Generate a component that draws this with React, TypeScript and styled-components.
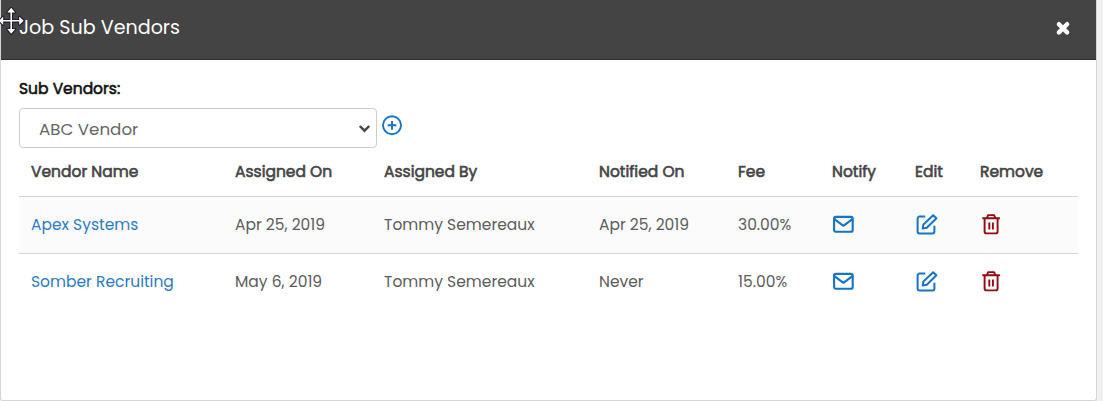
import React from "react";
import styled, { createGlobalStyle } from "styled-components";

const GlobalStyle = createGlobalStyle`
  * { box-sizing: border-box; }
  body {
    margin: 0;
    background: #f0f0f0;
    font-family: Poppins, Inter, "Open Sans", sans-serif;
    font-size: 15.5px;
    color: #5c5c5c;
    overflow: hidden;
  }
`;

const Dialog = styled.section`
  position: relative;
  width: 1097px;
  height: 401px;
  background: #fff;
  border: 1px solid #d6d6d6;
  border-top: 0;
  border-radius: 0 0 3px 3px;
`;

const Header = styled.header`
  display: flex;
  align-items: center;
  justify-content: space-between;
  height: 60px;
  padding: 0 25px 4px 18px;
  background: #444;
  border-bottom: 1px solid #303030;
`;

const Title = styled.h1`
  margin: 0;
  font-size: 19.1px;
  line-height: 28px;
  font-weight: 400;
  color: #fff;
`;

const IconButton = styled.button`
  display: flex;
  padding: 0;
  border: 0;
  background: none;
  color: ${(p) => p.color || "#1673c5"};
`;

const MoveCursor = styled.svg`
  position: absolute;
  left: -3px;
  top: 7px;
`;

const Body = styled.div`
  padding: 16px 18px 0 18px;
`;

const Label = styled.label`
  display: block;
  height: 31px;
  line-height: 26px;
  font-size: 15.5px;
  -webkit-text-stroke: 0.6px currentColor;
  color: #111;
`;

const PickerRow = styled.div`
  display: flex;
  align-items: flex-end;
  gap: 5px;
  height: 41px;
`;

const Picker = styled.div`
  display: flex;
  align-items: center;
  justify-content: space-between;
  width: 358px;
  height: 40px;
  padding: 1px 5px 0 19px;
  border: 1px solid #ccc;
  border-radius: 4px;
  font-size: 16.7px;
  color: #666;
`;

const Table = styled.table`
  width: 1059px;
  table-layout: fixed;
  border-collapse: collapse;
`;

const HeadCell = styled.th`
  height: 48px;
  padding: 0 0 1px 12px;
  text-align: left;
  white-space: nowrap;
  font-size: 15.5px;
  font-weight: 400;
  -webkit-text-stroke: 0.6px currentColor;
  color: #444;
`;

const Row = styled.tr<{ $shaded?: boolean }>`
  height: 57px;
  border-top: 1px solid #d4d4d4;
  background: ${(p) => (p.$shaded ? "#fbfbfb" : "#fff")};
`;

const Cell = styled.td`
  padding: 0 0 1px 12px;
  white-space: nowrap;
`;

const ActionCell = styled.td`
  padding: 0 0 2px 12px;
`;

const VendorLink = styled.a`
  color: #2b7bc4;
`;

const MailIcon = () => (
  <svg width="22" height="22" viewBox="0 0 22 22" fill="none" stroke="currentColor" strokeWidth="2.1" strokeLinejoin="round">
    <rect x="2.1" y="3.9" width="18.6" height="14.8" rx="1.8" />
    <path d="M2.4 6.2 11.4 12.8l9-6.6" />
  </svg>
);

const EditIcon = () => (
  <svg width="23" height="22" viewBox="0 0 23 22" fill="none" stroke="currentColor" strokeWidth="2" strokeLinejoin="round">
    <path d="M10.2 3.6H4.6a2 2 0 0 0-2 2v12.8a2 2 0 0 0 2 2h12.8a2 2 0 0 0 2-2v-5.6" />
    <path d="m18.2 2.2 3.2 3.1-9.6 9.4-4.1.8.7-4.1z" />
  </svg>
);

const TrashIcon = () => (
  <svg width="22" height="22" viewBox="0 0 22 22" fill="none" stroke="currentColor" strokeWidth="1.9" strokeLinejoin="round">
    <path d="M2.3 5.2h17.6M7 4.8l1.1-2.7h6l1.1 2.7M4.6 5.3v13.1a2 2 0 0 0 2 2h9a2 2 0 0 0 2-2V5.3" />
    <path d="M9.3 9.6v6.9M12.9 9.6v6.9" />
  </svg>
);

const columns = [
  { label: "Vendor Name", width: 204 },
  { label: "Assigned On", width: 149 },
  { label: "Assigned By", width: 215 },
  { label: "Notified On", width: 139 },
  { label: "Fee", width: 94 },
  { label: "Notify", width: 83 },
  { label: "Edit", width: 65 },
  { label: "Remove", width: 110 },
];

const vendors = [
  { name: "Apex Systems", values: ["Apr 25, 2019", "Tommy Semereaux", "Apr 25, 2019", "30.00%"] },
  { name: "Somber Recruiting", values: ["May 6, 2019", "Tommy Semereaux", "Never", "15.00%"] },
];

export default function App() {
  return (
    <>
      <GlobalStyle />
      <Dialog>
        <Header>
          <Title>Job Sub Vendors</Title>
          <IconButton color="#fff" aria-label="Close">
            <svg width="16" height="16" viewBox="0 0 16 16" stroke="currentColor" strokeWidth="4.4" strokeLinecap="round">
              <path d="m3.9 4.2 8.2 8.2M12.1 4.2l-8.2 8.2" />
            </svg>
          </IconButton>
        </Header>
        <MoveCursor width="28" height="28" viewBox="0 0 28 28" fill="#fff" stroke="#1c1c26" strokeLinejoin="round" paintOrder="stroke">
          <path strokeWidth="2.2" d="M13.2.8 9.2 5.6h3.2v7.4H5.2V9.6L1 13.8l4.2 4.2v-3.4h7.2V22H9.2l4 4.8 4-4.8H14v-7.4h7.2V18l4.5-4.2-4.5-4.2V13H14V5.6h3.2z" />
        </MoveCursor>
        <Body>
          <Label>Sub Vendors:</Label>
          <PickerRow>
            <Picker>
              ABC Vendor
              <svg width="13" height="10" viewBox="0 0 13 10" fill="none" stroke="#444" strokeWidth="2.4">
                <path d="m1.8 2 4.7 4.7L11.2 2" />
              </svg>
            </Picker>
            <IconButton aria-label="Add vendor">
              <svg width="21" height="33" viewBox="0 0 21 33" fill="none" stroke="currentColor" strokeWidth="1.9">
                <circle cx="10" cy="10.3" r="9" />
                <path d="M10 5.9v8.8M5.6 10.3h8.8" />
              </svg>
            </IconButton>
          </PickerRow>
          <Table>
            <colgroup>
              {columns.map((c) => <col key={c.label} width={c.width} />)}
            </colgroup>
            <thead>
              <tr>
                {columns.map((c) => <HeadCell key={c.label}>{c.label}</HeadCell>)}
              </tr>
            </thead>
            <tbody>
              {vendors.map((v, i) => (
                <Row key={v.name} $shaded={i === 0}>
                  <Cell><VendorLink>{v.name}</VendorLink></Cell>
                  {v.values.map((value, j) => <Cell key={j}>{value}</Cell>)}
                  <ActionCell><IconButton aria-label="Notify"><MailIcon /></IconButton></ActionCell>
                  <ActionCell><IconButton aria-label="Edit"><EditIcon /></IconButton></ActionCell>
                  <ActionCell><IconButton color="#920b12" aria-label="Remove"><TrashIcon /></IconButton></ActionCell>
                </Row>
              ))}
            </tbody>
          </Table>
        </Body>
      </Dialog>
    </>
  );
}
